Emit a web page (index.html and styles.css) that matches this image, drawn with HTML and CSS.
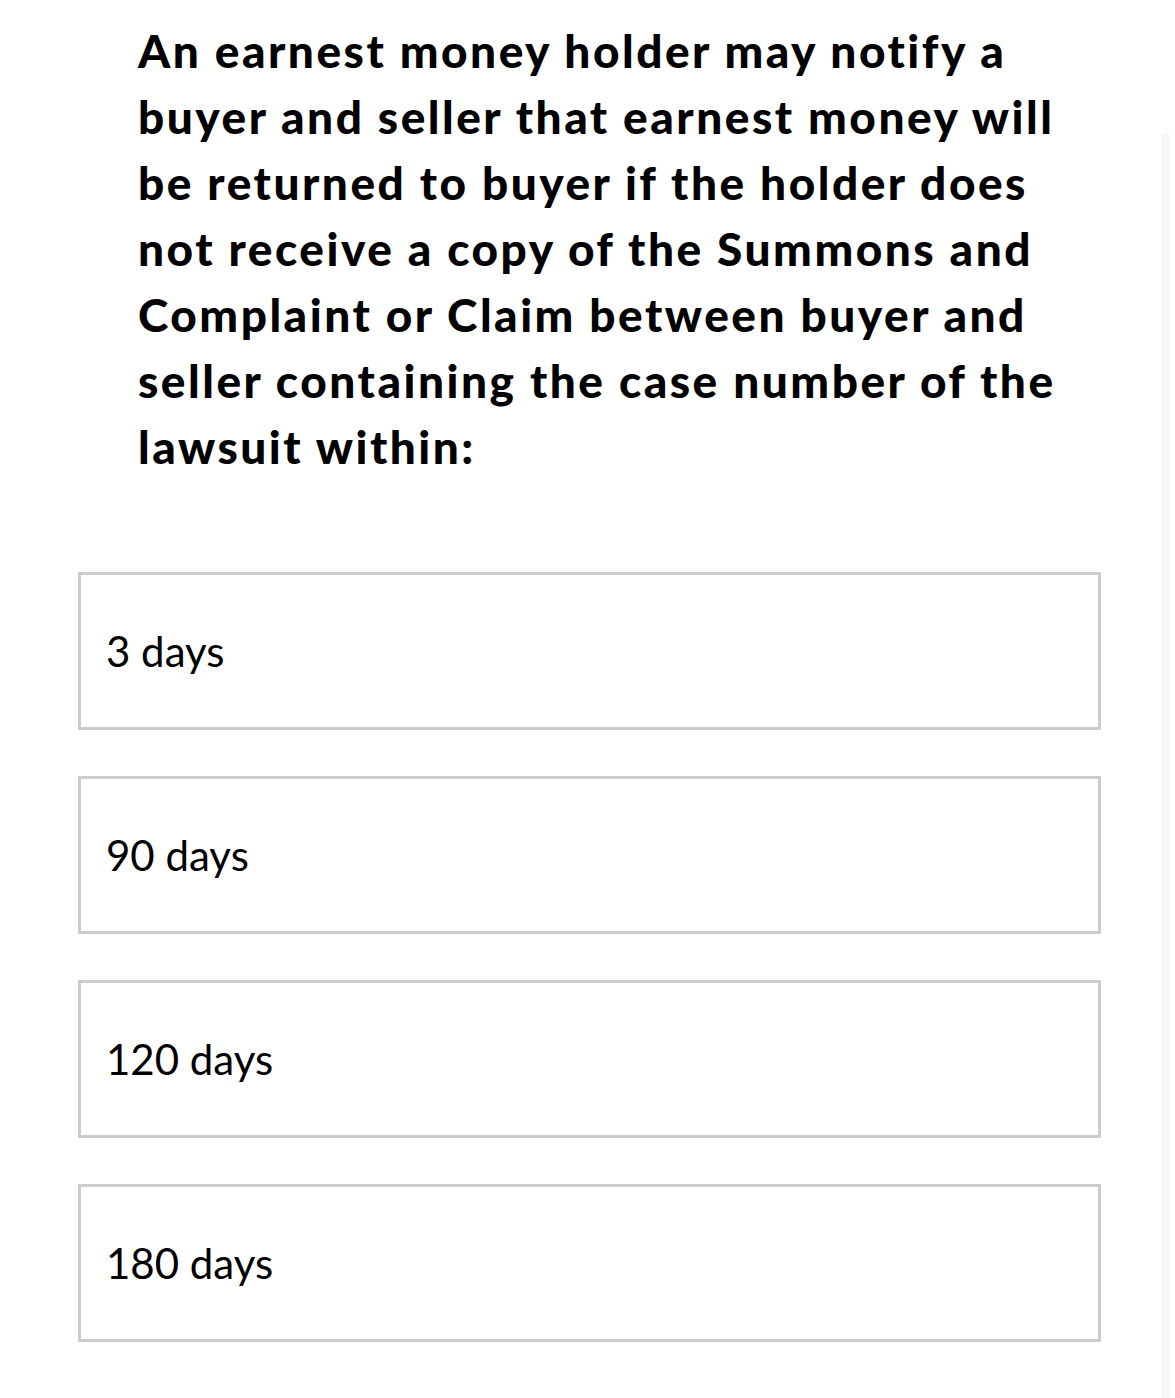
FILE: index.html
```html
<!DOCTYPE html>
<html lang="en">
<head>
<meta charset="utf-8">
<title>Question</title>
<link rel="stylesheet" href="styles.css">
</head>
<body>
<main class="quiz">
  <h1 class="question">An earnest money holder may notify a buyer and seller that earnest money will be returned to buyer if the holder does not receive a copy of the Summons and Complaint or Claim between buyer and seller containing the case number of the lawsuit within:</h1>
  <div class="options">
    <div class="option">3 days</div>
    <div class="option">90 days</div>
    <div class="option">120 days</div>
    <div class="option">180 days</div>
  </div>
</main>
<div class="scroll-track"></div>
</body>
</html>
```

FILE: styles.css
```css
html, body {
  margin: 0;
  padding: 0;
  background: #ffffff;
}
body {
  font-family: Lato, "Open Sans", sans-serif;
  color: #000;
}
.quiz {
  padding-top: 18px;
}
.question {
  margin: 0 0 0 138px;
  width: 928px;
  font-size: 46px;
  font-weight: 900;
  line-height: 66px;
  letter-spacing: 2.5px;
}
.options {
  margin: 92px 0 0 78px;
  width: 1023px;
  display: flex;
  flex-direction: column;
  gap: 46px;
}
.option {
  box-sizing: border-box;
  height: 158px;
  border: 3px solid #cccccc;
  display: flex;
  align-items: center;
  padding-left: 25px;
  font-size: 42px;
  font-weight: 400;
}
.scroll-track {
  position: fixed;
  left: 1161px;
  top: 133px;
  width: 9px;
  bottom: 0;
  background: #f7f7f7;
  border-radius: 4px 4px 0 0;
}
```
